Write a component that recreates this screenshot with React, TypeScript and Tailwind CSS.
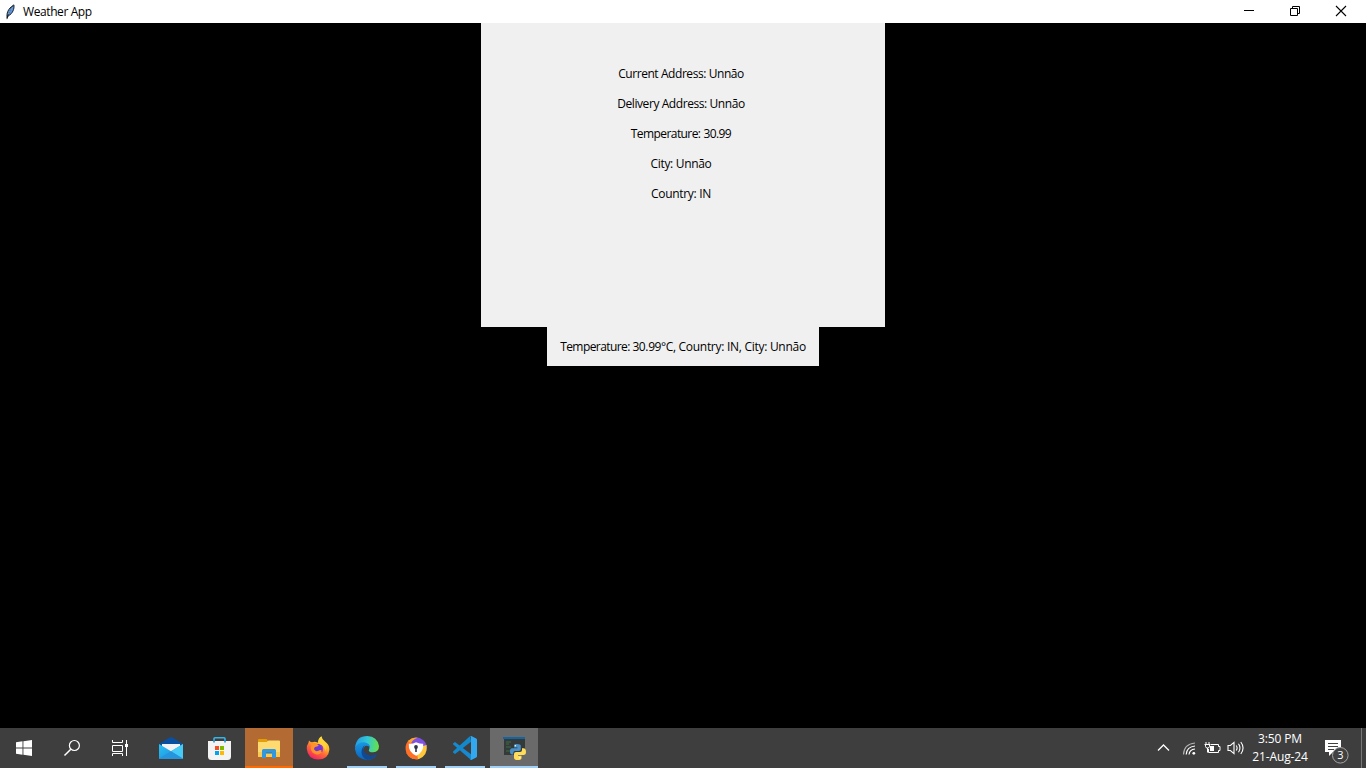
import type { ReactNode } from "react";

const lines = [
  { text: "Current Address: Unnāo", cls: "tracking-[-0.43px]" },
  { text: "Delivery Address: Unnāo", cls: "tracking-[-0.42px]" },
  { text: "Temperature: 30.99", cls: "tracking-[-0.58px] [word-spacing:0.5px]" },
  { text: "City: Unnāo", cls: "tracking-[-0.32px]" },
  { text: "Country: IN", cls: "tracking-[-0.3px]" },
];

function Feather() {
  return (
    <svg width="11" height="16" viewBox="0 0 12 18">
      <path d="M2.2 15.5C1.5 11 2.5 5.5 9.8 1C10.6 5 8.5 11 3.6 13.2Z" fill="#5b93dc" stroke="#16202e" strokeWidth="1.1" />
      <path d="M8.8 2.6C5.5 6 3.4 10 2 17" fill="none" stroke="#111" strokeWidth="1" />
      <path d="M8.6 3.4C6 6 4.4 8.3 3.5 11.4" fill="none" stroke="#a9cdf7" strokeWidth=".8" />
    </svg>
  );
}

function TitleBar() {
  return (
    <header className="flex h-[23px] items-center bg-white text-black">
      <div className="ml-[5px] mr-[6px] flex w-3 items-center"><Feather /></div>
      <h1 className="grow pt-px text-[12px] leading-[16px] tracking-[-0.4px]">Weather App</h1>
      <div className="mr-[2px] flex h-full pb-[2px]">
        <button className="flex h-full w-[45px] items-center justify-center" aria-label="Minimize">
          <svg width="11" height="11" viewBox="0 0 11 11" shapeRendering="crispEdges"><path d="M0 5h10v1H0z" /></svg>
        </button>
        <button className="flex h-full w-[46px] items-center justify-center" aria-label="Restore">
          <svg width="12" height="12" viewBox="0 0 12 12" fill="none" stroke="#000"><path d="M1.5 3.5h7v7h-7zM3.5 3.5v-2h7v7h-2" /></svg>
        </button>
        <button className="flex h-full w-[46px] items-center justify-center" aria-label="Close">
          <svg width="12" height="12" viewBox="0 0 12 12" fill="none" stroke="#000" strokeWidth="1.1"><path d="M1 1l10 10M11 1L1 11" /></svg>
        </button>
      </div>
    </header>
  );
}

function Mail() {
  return (
    <svg width="24" height="24" viewBox="0 0 24 24">
      <defs><linearGradient id="mailg" x1="0" y1="0" x2="1" y2="1"><stop offset="0" stopColor="#2cc3f4" /><stop offset="1" stopColor="#1b86d9" /></linearGradient></defs>
      <path d="M0 8L10.6 1.5Q12 .7 13.4 1.5L24 8V13H0Z" fill="#0a50a0" />
      <path d="M3 8H21V16H3Z" fill="#f3f3f5" />
      <path d="M0 8L12 15.2L24 8V22.2Q24 23 23.2 23H.8Q0 23 0 22.2Z" fill="url(#mailg)" />
      <path d="M12 15.2L24 8V22.2L23.5 23Z" fill="#45cbf5" />
      <path d="M0 22.5L12 15.2L24 22.5L23.2 23H.8Z" fill="#2695dd" />
    </svg>
  );
}

function Store() {
  return (
    <svg width="24" height="24" viewBox="0 0 24 24">
      <path d="M6 6V2.8Q6 1.8 7 1.8H16Q17 1.8 17 2.8V6" fill="none" stroke="#35b6e6" strokeWidth="1.6" />
      <path d="M0 5H23V20.5Q23 24 19.5 24H3.5Q0 24 0 20.5Z" fill="#f3f3f3" />
      <path d="M6 4V6.5M17 4V6.5" stroke="#168bc0" strokeWidth="1.5" />
      <path d="M7 10h4v4H7z" fill="#f25022" /><path d="M12 10h4v4h-4z" fill="#7fba00" />
      <path d="M7 15h4v4H7z" fill="#00a4ef" /><path d="M12 15h4v4h-4z" fill="#ffb900" />
    </svg>
  );
}

function Explorer() {
  return (
    <svg width="24" height="24" viewBox="0 0 24 24">
      <path d="M1 4Q1 3 2 3H9Q10 3 10.5 4L11 5H22Q23 5 23 6V12H1Z" fill="#e1a008" />
      <path d="M1 6H9.5L11.5 4.5H22Q23 4.5 23 5.5V20Q23 21 22 21H2Q1 21 1 20Z" fill="#ffda70" />
      <path d="M1 16H23V20Q23 21 22 21H2Q1 21 1 20Z" fill="#f8cb55" />
      <path d="M5 22V14.5Q5 13 6.5 13H17.5Q19 13 19 14.5V22H15V17H9V22Z" fill="#3297dc" />
      <path d="M9 16.5H15V17.5H9Z" fill="#1777b9" />
    </svg>
  );
}

function Firefox() {
  return (
    <svg width="24" height="24" viewBox="0 0 24 24">
      <defs>
        <linearGradient id="fxg" x1=".8" y1="0" x2=".25" y2="1"><stop offset="0" stopColor="#fff044" /><stop offset=".38" stopColor="#ffb52b" /><stop offset=".62" stopColor="#ff6938" /><stop offset="1" stopColor="#f31c67" /></linearGradient>
      </defs>
      <path d="M3 4.5Q4 6 6 6.2Q9 5 11.8 6.7Q12 2.3 15.4.2Q15.8 3.2 19 5.4Q23.4 8.5 23.4 13.4Q22.5 23.5 12 23.5Q1.8 23.2 .8 13Q.6 9.2 2.4 7Z" fill="url(#fxg)" />
      <circle cx="12.2" cy="12.2" r="4.3" fill="#7139cf" />
      <path d="M5.8 7.2Q9.5 5.7 12.8 9.6Q11.5 11 9 11.1Q7.7 12 8.2 13.8Q10 16 12.4 14.8Q14.7 13.3 16 15.1Q14.6 18.9 10.5 18.4Q5 17.3 4.7 12Z" fill="#ff9228" />
      <path d="M15.2 9.3Q17.7 12 15.7 16" stroke="#a13ad1" strokeWidth="1.2" fill="none" />
      <path d="M15.4.4Q15.8 3.6 18.6 6Q21.6 10 19.5 15Q18 8.8 12.6 7.4Q12.2 2.5 15.4.4Z" fill="#ffd63c" opacity=".8" />
    </svg>
  );
}

function Edge() {
  return (
    <svg width="24" height="24" viewBox="0 0 24 24">
      <defs>
        <linearGradient id="edg1" x1="0" y1=".4" x2="1" y2=".5"><stop offset="0" stopColor="#229be5" /><stop offset=".5" stopColor="#32c7d5" /><stop offset="1" stopColor="#66e247" /></linearGradient>
        <linearGradient id="edg2" x1="0" y1="0" x2="0" y2="1"><stop offset="0" stopColor="#1998e2" /><stop offset="1" stopColor="#0b63bd" /></linearGradient>
      </defs>
      <path d="M.1 11.4Q1.2 0 12.3 0Q22.3.5 24 10Q24 15.8 18.2 16.2Q12.5 16.2 14.1 13.4Q15.8 10 11 8Q5 6.1.1 11.4Z" fill="url(#edg1)" />
      <path d="M.1 11.4Q3.2 6 9.3 6.2Q15.6 7.2 15 12Q13.5 9 10.2 10Q5 15 11.2 20Q15 22.3 20.8 20.1Q17.5 24 12 24Q.8 23-.1 12.3Z" fill="url(#edg2)" />
      <path d="M9.8 9.3Q7.3 13 9.3 15.7Q12.2 20.3 18.3 19.3Q20.5 18.7 22.2 17.6Q22.8 17.3 22.4 18Q18.5 24 12.4 23.9Q6.8 22 6.5 16.5Q6.4 11.7 9.8 9.3Z" fill="#124a91" />
    </svg>
  );
}

function SecureBrowser() {
  return (
    <svg width="24" height="24" viewBox="0 0 24 24">
      <path d="M4.5 4.5Q12-1 19 4Q23.5 8 22.8 13L12 12Z" fill="#8052e2" />
      <path d="M22.6 9Q24 19.3 15 23Q9 24 5.8 21L12 12Z" fill="#ffc83c" />
      <path d="M14 23.2Q5.6 23.8 2.4 17.2Q-.2 9 5 4L12 12Z" fill="#ff7026" />
      <path d="M4 5Q9 .5 14 1.8Q9 3 7 7Z" fill="#ffa526" />
      <path d="M4.8 7.7Q8.2 8.4 12 6.2Q16.8 8 19.2 7.7Q20 15.8 12.2 19.8Q4 15.8 4.8 7.7Z" fill="#fff" />
      <circle cx="12" cy="11" r="1.9" fill="#2e3448" /><path d="M11.2 11h1.6v5h-1.6z" fill="#2e3448" />
    </svg>
  );
}

function Code() {
  return (
    <svg width="24" height="24" viewBox="0 0 24 24">
      <path d="M0 7.5L2 6L18 18.3V24L.3 8.6Q-.2 8 0 7.5Z" fill="#1689d0" />
      <path d="M0 16.4Q-.2 15.7.3 15.3L17.2 0L18 5.7L2 18Z" fill="#1389cb" />
      <path d="M17 .2Q17.6-.2 18.3.1L23.2 2.5Q24 2.9 24 3.8V20.2Q24 21.1 23.2 21.5L18.3 23.9Q17.5 24.2 17 23.7Q18 24 18 22.8V1.2Q18 0 17 .2Z" fill="#32a8f1" />
    </svg>
  );
}

function Python() {
  return (
    <svg width="24" height="24" viewBox="0 0 24 24">
      <path d="M2 1h21v18H2z" fill="#34393a" /><path d="M1 1h22v2H1z" fill="#1265a0" />
      <path d="M4 6h5M4 8h3M4 11h5M4 15h6" stroke="#3f7043" strokeWidth="1" />
      <path d="M12 9Q12 8 15 8Q18.8 8 18.8 9.8V13.2Q18.8 15 17 15H13Q11.3 15 11.3 17V18.5H10Q8 18.5 8 15.5Q8 12.2 10 12.2H15.5V11.4H12Z" fill="#4b90c4" />
      <path d="M20 12.2H21.5Q24 12.2 24 16Q24 19 21.8 19H16V19.8H19.5V22Q19.5 24 15.8 24Q12 24 12 21.7V18Q12 16 14 16H18Q20 16 20 14Z" fill="#ffdc5b" />
      <circle cx="13.4" cy="9.8" r=".7" fill="#fff" /><circle cx="17.8" cy="21.8" r=".7" fill="#fff" />
    </svg>
  );
}

function Task({ label, children, className = "", bar = "" }: { label: string; children: ReactNode; className?: string; bar?: string }) {
  return (
    <button aria-label={label} className={`flex h-10 w-12 flex-col items-center pt-2 ${className}`}>
      <span className="flex h-[30px] shrink-0 items-start">{children}</span>
      <span className={`h-[2px] ${bar}`} />
    </button>
  );
}

function Tray() {
  return (
    <div className="flex h-10 items-center text-white">
      <svg className="mr-[12px]" width="13" height="16" viewBox="0 0 13 16" fill="none" stroke="#fff" strokeWidth="1.3"><path d="M1 10.5L6.5 5L12 10.5" /></svg>
      <svg className="mr-[7px]" width="15" height="16" viewBox="0 0 15 16" fill="none" strokeWidth="1.2">
        <path d="M1.5 14.5Q2 4 13 3" stroke="#b5b5b5" /><path d="M4.2 14.5Q4.7 6.8 13 6" stroke="#fff" /><path d="M7 14.5Q7.6 9.5 13 9" stroke="#fff" />
        <circle cx="11.8" cy="13.3" r="1.4" fill="#fff" />
      </svg>
      <svg className="mr-[6px]" width="17" height="16" viewBox="0 0 17 16" fill="none" stroke="#fff">
        <path d="M6.5 4.5H14.5V6.5H16V10.5H14.5V12.5H4.5V9" /><path d="M6 6h4v5H6z" fill="#fff" stroke="none" />
        <path d="M2 2V4.5M5 2V4.5M.5 4.5H6M1.5 5V6.5Q1.5 8 3.5 8Q5.5 8 5.5 6.5V5M3.5 8V12.5" />
      </svg>
      <svg className="mr-[6px]" width="18" height="16" viewBox="0 0 18 16" fill="none" stroke="#fff" strokeWidth="1.1">
        <path d="M1 5.5H3.4L7 2.4V13.6L3.4 10.5H1Z" /><path d="M9.2 5.5Q11 8 9.2 10.5M11.5 3.8Q14.4 8 11.5 12.2M13.8 2Q18.3 8 13.8 14" />
      </svg>
      <div className="flex w-[58px] flex-col items-center text-[12px] leading-[18px] tracking-[-0.15px]">
        <span className="whitespace-nowrap">3:50 PM</span><span className="whitespace-nowrap">21-Aug-24</span>
      </div>
      <svg className="ml-[15px]" width="25" height="32" viewBox="0 0 25 32">
        <path d="M1 8H17V20H9L5 24V20H1Z" fill="#fff" /><path d="M4 11.5H14M4 14.5H14M4 17.5H10" stroke="#414141" />
        <circle cx="16.3" cy="23.3" r="7.8" fill="#414141" stroke="#a5a5a5" />
        <text x="16.3" y="27.3" textAnchor="middle" fill="#fff" fontSize="11" fontFamily="Open Sans">3</text>
      </svg>
      <div className="ml-[12px] mr-[4px] h-full w-px bg-[#777777]" />
    </div>
  );
}

function Taskbar() {
  return (
    <footer className="flex h-10 items-center justify-between bg-[#3e3e3e]">
      <nav className="flex items-center gap-px">
        <button aria-label="Start" className="flex h-10 w-12 items-center justify-center"><svg width="16" height="16" viewBox="0 0 16 16" fill="#fff"><path d="M0 2.2L6.5 1.3V7.5H0zM7.4 1.2L16 0V7.5H7.4zM0 8.5H6.5V14.7L0 13.8zM7.4 8.5H16V16L7.4 14.8z" /></svg></button>
        <button aria-label="Search" className="-ml-px flex h-10 w-12 items-center justify-center"><svg width="18" height="18" viewBox="0 0 18 18" fill="none" stroke="#fff" strokeWidth="1.2"><circle cx="11.4" cy="6.5" r="5" /><path d="M7.8 10.2L1.5 16.5" strokeWidth="1.5" /></svg></button>
        <button aria-label="Task view" className="flex h-10 w-[49px] items-center justify-center pr-[3px]"><svg width="18" height="16" viewBox="0 0 18 16" fill="none" stroke="#fff"><path d="M1.5 0V2.5H11.5V0M1.5 5.5H11.5V11.5H1.5ZM1.5 16V13.5H11.5V16M15.5 0V16" /><path d="M14 4h3v3h-3z" fill="#fff" stroke="none" /></svg></button>
        <Task label="Mail"><Mail /></Task>
        <Task label="Store"><Store /></Task>
        <Task label="File Explorer" className="bg-[#b36b33]" bar="w-12 bg-[#ff6b00]"><Explorer /></Task>
        <Task label="Firefox"><Firefox /></Task>
        <Task label="Edge" bar="w-10 bg-[#9fd1f8]"><Edge /></Task>
        <Task label="Secure Browser" bar="w-10 bg-[#9fd1f8]"><SecureBrowser /></Task>
        <Task label="Visual Studio Code" bar="w-10 bg-[#9fd1f8]"><Code /></Task>
        <Task label="Weather App" className="bg-[#6a6a6a]" bar="w-12 bg-[#9fd1f8]"><Python /></Task>
      </nav>
      <Tray />
    </footer>
  );
}

export default function App() {
  return (
    <div className="flex h-screen w-full flex-col overflow-hidden bg-black font-['Open_Sans',sans-serif]">
      <TitleBar />
      <main className="flex grow flex-col items-center text-[12px] text-black">
        <section className="flex h-[304px] w-[404px] flex-col items-center bg-[#f0f0f0] pr-[4px] pt-[36px]">
          {lines.map((line) => <p key={line.text} className={`h-[30px] whitespace-nowrap leading-[30px] ${line.cls}`}>{line.text}</p>)}
        </section>
        <p className="h-[39px] w-[272px] whitespace-nowrap bg-[#f0f0f0] text-center leading-[39px] tracking-[-0.28px]">
          <span className="tracking-[-0.57px]">Temperature: </span>
          <span className="tracking-[-0.38px]">30.99°C, </span>
          Country: IN, City: Unnāo
        </p>
      </main>
      <Taskbar />
    </div>
  );
}
